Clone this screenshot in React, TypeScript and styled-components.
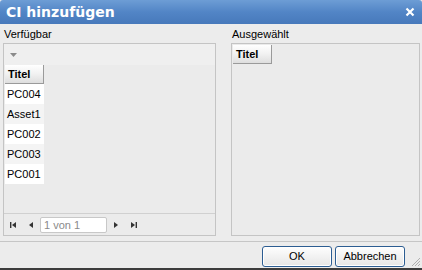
import styled, { createGlobalStyle } from 'styled-components';

const GlobalStyle = createGlobalStyle`
	html, body {
		margin: 0;
		padding: 0;
		background: #ffffff;
	}
	* {
		box-sizing: border-box;
	}
`;

const available = ['PC004', 'Asset1', 'PC002', 'PC003', 'PC001'];

function App() {
	return (
		<>
			<GlobalStyle />
			<Window>
				<TitleBar>
					<TitleText>CI hinzufügen</TitleText>
					<CloseButton>
						<svg width='10' height='10' viewBox='0 0 10 10'>
							<path d='M1.5 1.5 L8.5 8.5 M8.5 1.5 L1.5 8.5' stroke='#ffffff' strokeWidth='2.2' />
						</svg>
					</CloseButton>
				</TitleBar>
				<Body>
					<Column width={213}>
						<Label>Verfügbar</Label>
						<Panel>
							<FilterBar>
								<svg width='7' height='4' viewBox='0 0 7 4'>
									<path d='M0 0 L7 0 L3.5 4 Z' fill='#8a8a8a' />
								</svg>
							</FilterBar>
							<GridArea>
								<HeaderCell>Titel</HeaderCell>
								{available.map((name, i) => (
									<Row key={name} alt={i % 2 === 1}>
										{name}
									</Row>
								))}
							</GridArea>
							<Pager>
								<PagerIcon>
									<svg width='8' height='8' viewBox='0 0 8 8'>
										<rect x='1' y='1' width='1.4' height='6' fill='#333' />
										<path d='M7 1 L7 7 L3 4 Z' fill='#333' />
									</svg>
								</PagerIcon>
								<PagerIcon>
									<svg width='8' height='8' viewBox='0 0 8 8'>
										<path d='M6 1 L6 7 L2 4 Z' fill='#333' />
									</svg>
								</PagerIcon>
								<PageInput>1 von 1</PageInput>
								<PagerIcon>
									<svg width='8' height='8' viewBox='0 0 8 8'>
										<path d='M2 1 L2 7 L6 4 Z' fill='#333' />
									</svg>
								</PagerIcon>
								<PagerIcon>
									<svg width='8' height='8' viewBox='0 0 8 8'>
										<path d='M1 1 L1 7 L5 4 Z' fill='#333' />
										<rect x='5.6' y='1' width='1.4' height='6' fill='#333' />
									</svg>
								</PagerIcon>
							</Pager>
						</Panel>
					</Column>
					<Column width={189}>
						<Label>Ausgewählt</Label>
						<Panel>
							<SelectedArea>
								<HeaderCell>Titel</HeaderCell>
							</SelectedArea>
						</Panel>
					</Column>
				</Body>
				<Footer>
					<Button>OK</Button>
					<Button>Abbrechen</Button>
					<Grip>
						<svg width='12' height='12' viewBox='0 0 12 12'>
							<path d='M11 3 L3 11 M11 6 L6 11 M11 9 L9 11' stroke='#b0b0b0' strokeWidth='1' />
						</svg>
					</Grip>
				</Footer>
			</Window>
		</>
	);
}

const Window = styled.div`
	width: 422px;
	height: 270px;
	display: flex;
	flex-direction: column;
	background: #ececec;
	font-family: 'Liberation Sans', Arial, sans-serif;
	font-size: 11px;
	color: #000;
	border-bottom: 2px solid #3c3c3c;
	position: relative;
`;

const TitleBar = styled.div`
	height: 24px;
	display: flex;
	align-items: center;
	justify-content: space-between;
	padding: 0 6px;
	background: linear-gradient(to bottom, #6d9dd5 0%, #5285c6 50%, #4779bb 100%);
	border-radius: 3px 3px 0 0;
`;

const TitleText = styled.span`
	color: #ffffff;
	font-family: 'DejaVu Sans', sans-serif;
	font-weight: bold;
	font-size: 14px;
`;

const CloseButton = styled.span`
	display: flex;
	align-items: center;
	margin-right: 1px;
`;

const Body = styled.div`
	flex: 1;
	display: flex;
	gap: 15px;
	padding: 3px 2px 5px 3px;
	border-bottom: 1px solid #c6c6c6;
`;

const Column = styled.div<{ width: number }>`
	display: flex;
	flex-direction: column;
	width: ${(props) => props.width}px;
`;

const Label = styled.div`
	height: 16px;
	line-height: 14px;
	padding-left: 1px;
`;

const Panel = styled.div`
	flex: 1;
	display: flex;
	flex-direction: column;
	border: 1px solid #c4c4c4;
	background: #ebebeb;
`;

const FilterBar = styled.div`
	height: 21px;
	display: flex;
	align-items: center;
	padding-left: 6px;
	background: #efefef;
`;

const GridArea = styled.div`
	flex: 1;
	padding-left: 1px;
	display: flex;
	flex-direction: column;
	align-items: flex-start;
`;

const SelectedArea = styled.div`
	flex: 1;
	padding: 1px 0 0 1px;
`;

const HeaderCell = styled.div`
	width: 39px;
	height: 19px;
	line-height: 18px;
	padding-left: 3px;
	font-weight: bold;
	background: linear-gradient(to bottom, #ffffff 0%, #f1f1f1 50%, #dedede 100%);
	border-right: 1px solid #9a9a9a;
	border-bottom: 1px solid #9a9a9a;
`;

const Row = styled.div<{ alt: boolean }>`
	width: 39px;
	height: 20px;
	line-height: 20px;
	padding-left: 2px;
	background: ${(props) => (props.alt ? '#f4f4f4' : '#ffffff')};
	white-space: nowrap;
	overflow: hidden;
`;

const Pager = styled.div`
	height: 22px;
	display: flex;
	align-items: center;
	border-top: 1px solid #d0d0d0;
`;

const PagerIcon = styled.span`
	display: flex;
	justify-content: center;
	width: 18px;
	height: 8px;
`;

const PageInput = styled.div`
	width: 67px;
	height: 16px;
	line-height: 14px;
	padding-left: 3px;
	background: #ffffff;
	border: 1px solid #c8c8c8;
	border-radius: 2px;
	color: #8a8a8a;
`;

const Footer = styled.div`
	height: 26px;
	display: flex;
	align-items: center;
	justify-content: flex-end;
	gap: 3px;
	padding-right: 17px;
	padding-top: 2px;
`;

const Button = styled.div`
	height: 21px;
	width: 70px;
	display: flex;
	align-items: center;
	justify-content: center;
	border: 1px solid #2c5d92;
	border-radius: 3px;
	background: linear-gradient(to bottom, #fefefe 0%, #f2f2f2 50%, #e6e6e6 100%);
	box-shadow: inset 0 0 0 1px #ffffff;
`;

const Grip = styled.span`
	position: absolute;
	right: 1px;
	bottom: 1px;
	display: flex;
`;

export default App;
